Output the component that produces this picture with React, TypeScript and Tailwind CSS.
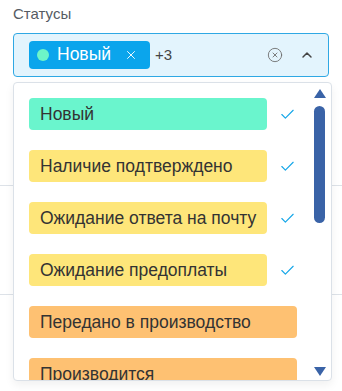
import React from 'react';
import { Check, X, ChevronUp, CircleX } from 'lucide-react';

type Status = { label: string; bg: string; selected: boolean };

const STATUSES: Status[] = [
  { label: 'Новый', bg: 'bg-[#6af5cd]', selected: true },
  { label: 'Наличие подтверждено', bg: 'bg-[#fee67a]', selected: true },
  { label: 'Ожидание ответа на почту', bg: 'bg-[#fee67a]', selected: true },
  { label: 'Ожидание предоплаты', bg: 'bg-[#fee67a]', selected: true },
  { label: 'Передано в производство', bg: 'bg-[#fec172]', selected: false },
  { label: 'Производится', bg: 'bg-[#fec172]', selected: false },
];

export default function App() {
  return (
    <div
      className="relative w-[342px] h-[391px] bg-white overflow-hidden"
      style={{ fontFamily: '"Liberation Sans", Arial, sans-serif' }}
    >
      <div className="px-[13px] pt-[4px]">
        <div className="text-[15px] leading-[20px] text-[#555b63]">Статусы</div>

        {/* trigger */}
        <div className="mt-[9px] h-[44px] flex items-center pl-[15px] pr-[13px] bg-[#e3f4fd] border border-[#2fa8e4] rounded-[4px]">
          <div className="flex items-center h-[28px] pl-[8px] pr-[12px] rounded-[4px] bg-[#0ba5ec] text-white">
            <span className="w-[12px] h-[12px] rounded-full bg-[#6ef5c8]" />
            <span className="ml-[8px] text-[17.5px] leading-none">Новый</span>
            <X size={14} strokeWidth={1.6} className="ml-[13px]" />
          </div>
          <span className="ml-[5px] text-[15px] text-[#444]">+3</span>
          <div className="ml-auto flex items-center gap-[16px] text-[#6b6b6b]">
            <CircleX size={16} strokeWidth={1.3} />
            <ChevronUp size={16} strokeWidth={2.2} className="text-[#444]" />
          </div>
        </div>
      </div>

      {/* underlying table rows */}
      <div className="mt-[108px] border-b border-[#dde2e8]" />
      <div className="mt-[108px] border-b border-[#dde2e8]" />

      {/* dropdown */}
      <div className="absolute left-[13px] top-[82px] w-[319px] h-[299px] bg-white border border-[#dbe1e8] rounded-[4px] shadow-[0_4px_10px_rgba(0,0,0,0.06)] overflow-hidden flex">
        <div className="flex-1 pl-[15px] pt-[15px] flex flex-col gap-[20px]">
          {STATUSES.map((s) => (
            <div key={s.label} className="flex items-center w-[268px]">
              <div
                className={`${s.bg} ${s.selected ? 'w-[238px]' : 'w-[268px]'} h-[32px] shrink-0 rounded-[4px] px-[11px] flex items-center text-[17.5px] text-[#333] whitespace-nowrap`}
              >
                {s.label}
              </div>
              {s.selected && (
                <Check size={17} strokeWidth={1.6} className="ml-[12px] text-[#14a6e8]" />
              )}
            </div>
          ))}
        </div>
        {/* scrollbar */}
        <div className="w-[15px] mr-[4px] flex flex-col items-center pt-[6px] pb-[4px]">
          <div className="w-0 h-0 border-l-[6px] border-r-[6px] border-b-[9px] border-l-transparent border-r-transparent border-b-[#3a63a7]" />
          <div className="mt-[8px] w-[11px] h-[117px] rounded-full bg-[#3a63a7]" />
          <div className="mt-auto w-0 h-0 border-l-[6px] border-r-[6px] border-t-[9px] border-l-transparent border-r-transparent border-t-[#3a63a7]" />
        </div>
      </div>
    </div>
  );
}
